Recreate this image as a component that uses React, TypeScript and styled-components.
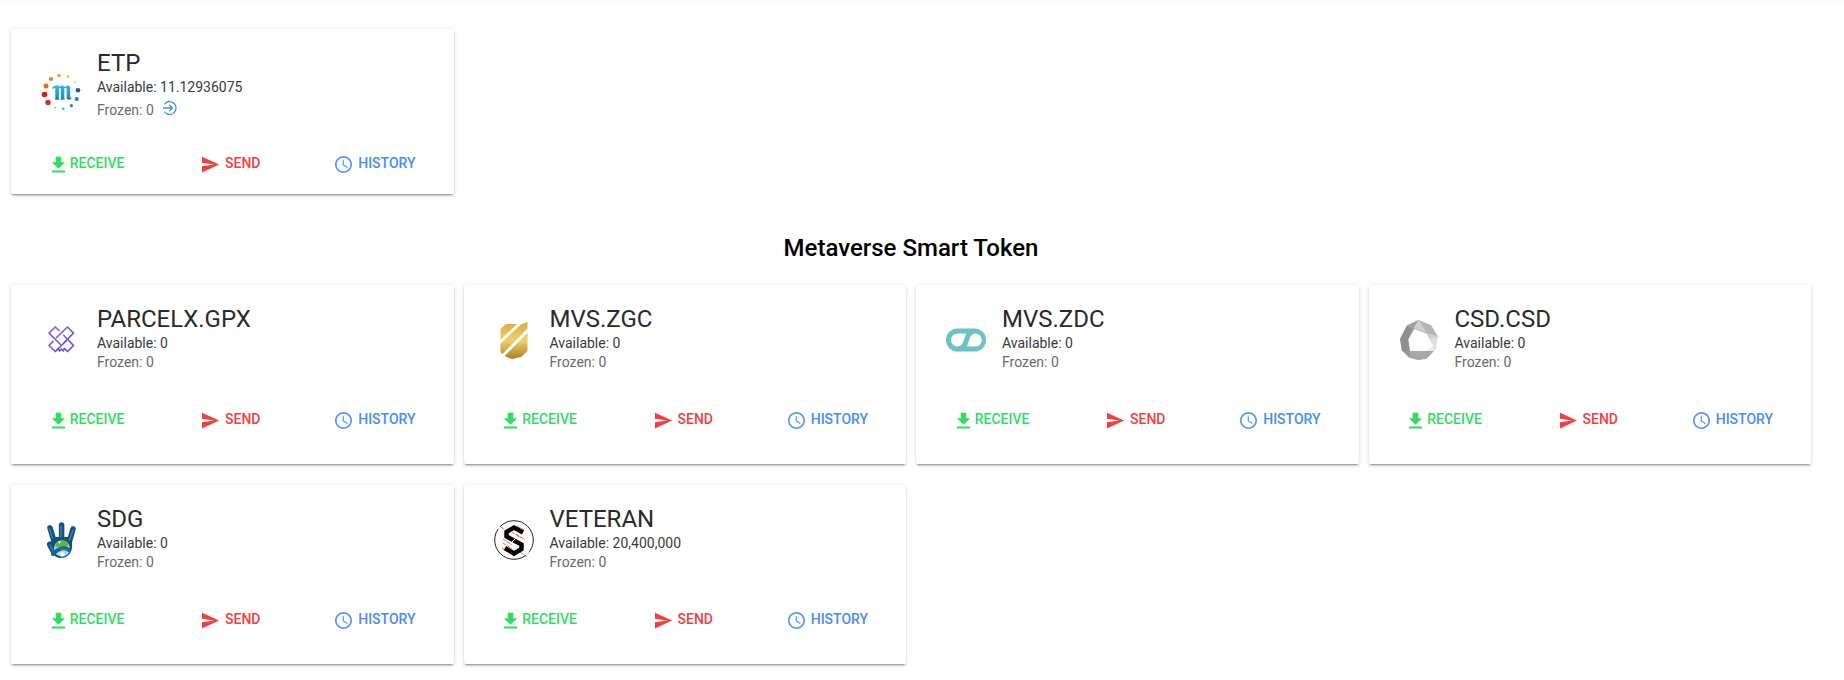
import React from "react";
import styled, { createGlobalStyle } from "styled-components";
import { IoMdDownload, IoMdSend, IoMdTime } from "react-icons/io";

const GlobalStyle = createGlobalStyle`
  *, *::before, *::after { box-sizing: border-box; }
  body {
    margin: 0;
    background: #fff;
    color: #000;
    font-family: Roboto, "Noto Sans", sans-serif;
    font-size: 14px;
  }
`;

const Page = styled.main`
  padding: 28px 33px 16px 11px;
  border-top: 1px solid #fafafa;
`;

const Grid = styled.div`
  display: grid;
  grid-template-columns: repeat(4, minmax(0, 1fr));
  gap: 21px 10px;
`;

const SectionTitle = styled.h2`
  margin: 39px 0 22px;
  font-size: 24px;
  line-height: 30px;
  font-weight: 500;
  text-align: center;
`;

const Card = styled.article<{ $compact?: boolean }>`
  padding: 16px 7px ${(p) => (p.$compact ? 13 : 27)}px 3px;
  border-radius: 2px;
  background: #fff;
  box-shadow: 0 2px 2px rgba(0, 0, 0, 0.14), 0 3px 1px -2px rgba(0, 0, 0, 0.2), 0 1px 5px rgba(0, 0, 0, 0.12);
`;

const Summary = styled.div`
  display: flex;
  align-items: flex-start;
  gap: 16px;
  height: 92px;
  padding-left: 27px;
`;

const LogoSlot = styled.div<{ $tall?: boolean }>`
  flex: none;
  padding-top: ${(p) => (p.$tall ? 28 : 19)}px;
`;

const Info = styled.div`
  padding-top: 4px;
`;

const Name = styled.h3`
  margin: 0 0 1px;
  font-size: 24px;
  line-height: 28px;
  font-weight: 400;
  color: #2a2a2a;
`;

const Balance = styled.p<{ $muted?: boolean }>`
  display: flex;
  align-items: center;
  gap: 8px;
  margin: 0;
  line-height: 19px;
  color: ${(p) => (p.$muted ? "#6a6a6a" : "#3a3a3a")};
`;

const FrozenRow = styled(Balance)<{ $tall?: boolean }>`
  line-height: ${(p) => (p.$tall ? 27 : 19)}px;
`;

const DepositButton = styled.button`
  display: flex;
  padding: 0 0 6px;
  border: 0;
  background: none;
  color: #488aff;
  cursor: pointer;
`;

const Actions = styled.div`
  display: grid;
  grid-template-columns: repeat(3, minmax(0, 1fr));
  margin-top: 8px;
`;

const Action = styled.button<{ $tone: string; $gap: number }>`
  display: flex;
  align-items: center;
  justify-content: center;
  gap: ${(p) => p.$gap}px;
  height: 36px;
  padding: 0;
  border: 0;
  background: none;
  color: ${(p) => p.$tone};
  font: 500 14px/20px Roboto, "Noto Sans", sans-serif;
  text-transform: uppercase;
  cursor: pointer;

  svg {
    margin-top: 2px;
  }
`;

const Logo = styled.svg`
  display: block;
  width: 40px;
  height: 40px;
`;

const EtpLogo = () => (
  <Logo viewBox="0 0 40 40" aria-hidden="true">
    <defs>
      <linearGradient id="etp" x1="0" y1="0" x2="0" y2="1">
        <stop offset="0" stopColor="#35bbe6" />
        <stop offset="1" stopColor="#1b7fb0" />
      </linearGradient>
    </defs>
    <circle cx="18" cy="2.6" r="1.7" fill="#f39a1f" />
    <circle cx="27" cy="3.7" r="1.4" fill="#f8c11c" />
    <circle cx="33.8" cy="9.3" r="1.1" fill="#fbd334" />
    <circle cx="10" cy="6" r="2.1" fill="#ef7a1a" />
    <circle cx="5" cy="13" r="2.5" fill="#ee6a15" />
    <circle cx="3.5" cy="21.5" r="2.8" fill="#e8141b" />
    <circle cx="7" cy="29.5" r="2.7" fill="#dd2a1c" />
    <circle cx="37" cy="17.3" r="2.3" fill="#14609a" />
    <circle cx="35.7" cy="26" r="2.1" fill="#1e87b8" />
    <circle cx="30.4" cy="32.7" r="1.6" fill="#2485bd" />
    <circle cx="22.3" cy="35.8" r="1.2" fill="#2fb1df" />
    <circle cx="14" cy="34.6" r="0.9" fill="#45c1ea" />
    <path
      fill="url(#etp)"
      d="M11 16c.6-2.700 2-3.500 4.200-3.500H18v1.600c1.200-1.200 2.400-1.800 4-1.600l1.500 1.600c1.300-1.300 2.800-1.800 4.500-1.600l1.200 1.500v10l1.500 1.500-2.700 1.600-2.300-1.400V15.500l-1.700-.6-.7.6v9.600l.8 1.200-4.300.6v-11.400l-1.200-.6-.7.6v9.600l.8 1.400-4.400.6V15.300c-1.300-.3-2.400-.2-3.500.7z"
    />
  </Logo>
);

const ParcelLogo = () => (
  <Logo viewBox="0 0 40 40" aria-hidden="true">
    <defs>
      <linearGradient id="parcel" x1="7" y1="7" x2="30" y2="32" gradientUnits="userSpaceOnUse">
        <stop offset="0" stopColor="#9a62ee" />
        <stop offset="1" stopColor="#5257ea" />
      </linearGradient>
    </defs>
    <g fill="none" stroke="url(#parcel)" strokeWidth="1.7" strokeLinejoin="round">
      <path d="M18.5 11 14.300 7 8 13.200 20 25" />
      <path d="M15 18 26.500 7 32.500 13.200 22.800 23" />
      <path d="M22.300 15 32.500 25.500 26.500 31.500 23 28" />
      <path d="M12.500 20.800 8 25.500 14.300 31.500 25.500 20.500" />
      <path d="M15 31 17.500 28.500 18.500 31 20.400 29 22.300 31 23.300 28.500" />
    </g>
  </Logo>
);

const ZgcLogo = () => (
  <Logo viewBox="0 0 40 40" aria-hidden="true">
    <defs>
      <linearGradient id="zgc" x1="0" y1="3" x2="0" y2="38" gradientUnits="userSpaceOnUse">
        <stop offset="0" stopColor="#d9ae3f" />
        <stop offset=".5" stopColor="#f0d06c" />
        <stop offset="1" stopColor="#ae8424" />
      </linearGradient>
    </defs>
    <g fill="url(#zgc)">
      <path d="M6.500 20V9L12 4H23L6.500 20z" />
      <path d="M6.500 32V23.500L27 4.500 33.500 2v6.500L8.500 34z" />
      <path d="M10.500 36 33.500 13V31L27 37 18 39z" />
    </g>
  </Logo>
);

const ZdcLogo = () => (
  <Logo viewBox="0 0 40 40" aria-hidden="true">
    <rect y="8.500" width="40" height="23" rx="11.500" fill="#6cc3c1" />
    <path fill="#fff" d="M12 13.500H20L17.500 21a7 7 0 0 1-6.500 5.500 6.500 6.500 0 0 1 1-13zM28.500 26.500H21L23.500 19a7 7 0 0 1 6.500-5.500 6.500 6.500 0 0 1-1.500 13z" />
  </Logo>
);

const CsdLogo = () => (
  <Logo viewBox="0 0 40 40" aria-hidden="true">
    <path fill="#b5b5b5" d="M19.500 0 32 5l6.500 11-2 13-9 9.500-8 1.500-10-2.500L3 30.500 1 19 8 5.500z" />
    <path fill="#8f8f8f" d="M8 5.500 14 9 9 20 11 31H3L1 19z" />
    <path fill="#a0a0a0" d="M8 5.500 19.500 0 14 9z" />
    <path fill="#cfcfcf" d="M19.500 0 28 13 15 8zM28 13 38.500 16.500 36 27z" />
    <path fill="#dfdfdf" d="M38.500 16.500 36.500 29 35 31 31 18z" />
    <path fill="#989898" d="M3 30.500H11L12 38z" />
    <path fill="#a8a8a8" d="M12 38 11 31H35L27.500 38.500 19.500 40z" />
    <path fill="#fff" d="M15.500 9 28 14 35 27 35 31H11L9.500 19z" />
    <path fill="#ececec" d="M35 25V31H27z" />
  </Logo>
);

const HandLogo = () => (
  <Logo viewBox="0 0 40 40" aria-hidden="true">
    <g fill="none" stroke="#17507f" strokeLinecap="round">
      <path strokeWidth="5.500" d="M9 8 13 21M20.600 5V21M32 9 28 23" />
      <path strokeWidth="6" d="M9 24.500 13 32" />
    </g>
    <path fill="#17507f" d="M10 20 15 17H29L31 23C32 31 28 38 20 38 12 38 9 31 10 20z" />
    <circle cx="21" cy="28.500" r="8" fill="#a9d8f1" />
    <path fill="#5cb83c" d="M14.500 24c2-4 8-5 12-2l1 4-4 1-1 3-4-3-4 0z" />
    <path fill="#fff" d="M17 21.500 20 21 18.500 24zM18 33l4-1 2 3-3 2z" />
    <path fill="none" stroke="#1b5f8c" strokeWidth="4" strokeLinecap="round" d="M28 30C22 26 17 29 12 34" />
    <path fill="none" stroke="#2d8fc0" strokeWidth="1.200" strokeLinecap="round" d="M8.500 9 11.500 18M20 6V17M32 10 28.500 20M9 25 12 31M27 30 20 29" />
  </Logo>
);

const VeteranLogo = () => (
  <Logo viewBox="0 0 40 40" aria-hidden="true">
    <circle cx="20" cy="20" r="19.300" fill="none" stroke="#222" strokeWidth="1" />
    <path stroke="#fff" strokeWidth="2.500" d="M4.500 7 8 10M31.500 34.500 34.500 31" />
    <path
      fill="none"
      stroke="#ee5648"
      strokeWidth=".9"
      strokeDasharray="4 1"
      d="M7 7 15 13M23 6 30 10M22 14 31 20M9 19 18 25M9 23 18 29M8 28 13 32M26 32 33 37M18 12 27 18"
    />
    <path fill="none" stroke="#050505" strokeWidth="4.500" d="M29 12.500 20 7.500 12.500 12V16.500L27.500 24.500V29L20 33.500 11 28" />
    <path stroke="#fff" strokeWidth="1" d="M17.500 22.500 22.500 17.500" />
  </Logo>
);

const DepositIcon = () => (
  <svg width="16" height="16" viewBox="0 0 16 16" fill="none" stroke="currentColor" strokeWidth="1.400" aria-hidden="true">
    <path d="M2.400 4.300A6.400 6.400 0 1 1 2.400 11.700" strokeDasharray="7 .6" />
    <path d="M1 8H10M7.300 5 10.300 8 7.300 11" />
  </svg>
);

type Token = { name: string; available: string; logo: React.ReactNode; deposit?: boolean };

const tokens: Token[] = [
  { name: "PARCELX.GPX", available: "0", logo: <ParcelLogo /> },
  { name: "MVS.ZGC", available: "0", logo: <ZgcLogo /> },
  { name: "MVS.ZDC", available: "0", logo: <ZdcLogo /> },
  { name: "CSD.CSD", available: "0", logo: <CsdLogo /> },
  { name: "SDG", available: "0", logo: <HandLogo /> },
  { name: "VETERAN", available: "20,400,000", logo: <VeteranLogo /> },
];

const TokenCard = ({ name, available, logo, deposit }: Token) => (
  <Card $compact={deposit}>
    <Summary>
      <LogoSlot $tall={deposit}>{logo}</LogoSlot>
      <Info>
        <Name>{name}</Name>
        <Balance>Available: {available}</Balance>
        <FrozenRow $muted $tall={deposit}>
          Frozen: 0
          {deposit && (
            <DepositButton type="button" aria-label="Deposit">
              <DepositIcon />
            </DepositButton>
          )}
        </FrozenRow>
      </Info>
    </Summary>
    <Actions>
      <Action type="button" $tone="#32db64" $gap={1}><IoMdDownload size={21} />Receive</Action>
      <Action type="button" $tone="#f53d3d" $gap={4}><IoMdSend size={21} />Send</Action>
      <Action type="button" $tone="#488aff" $gap={4}><IoMdTime size={21} />History</Action>
    </Actions>
  </Card>
);

export default function App() {
  return (
    <>
      <GlobalStyle />
      <Page>
        <Grid>
          <TokenCard name="ETP" available="11.12936075" logo={<EtpLogo />} deposit />
        </Grid>
        <SectionTitle>Metaverse Smart Token</SectionTitle>
        <Grid>
          {tokens.map((token) => (
            <TokenCard key={token.name} {...token} />
          ))}
        </Grid>
      </Page>
    </>
  );
}
